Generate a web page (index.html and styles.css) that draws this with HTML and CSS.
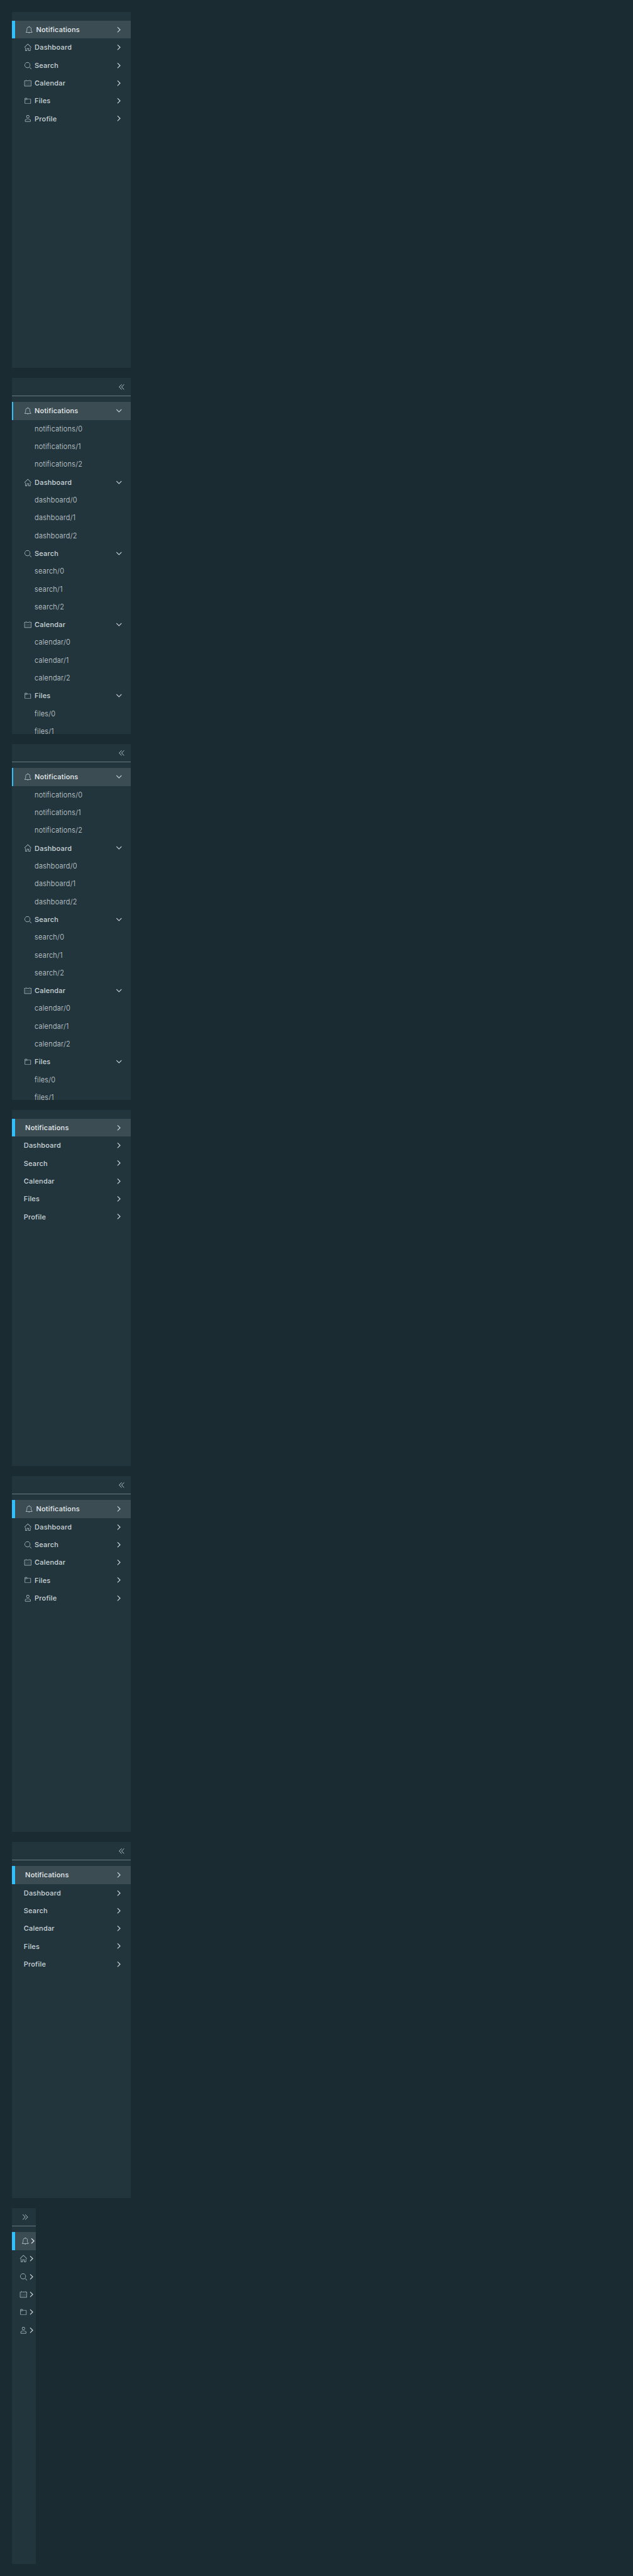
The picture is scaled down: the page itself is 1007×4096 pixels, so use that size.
FILE: index.html
```html
<!DOCTYPE html>
<html lang="en">
<head>
<meta charset="utf-8">
<title>Vertical navigation</title>
<link rel="stylesheet" href="styles.css">
</head>
<body>
<svg class="sprite" aria-hidden="true">
  <symbol id="bell" viewBox="0 0 36 36"><path d="M32.51,27.83A14.4,14.4,0,0,1,30,24.9a12.63,12.63,0,0,1-1.35-4.81V15.15A10.81,10.81,0,0,0,19.21,4.4V3.11a1.33,1.33,0,1,0-2.67,0V4.42a10.81,10.81,0,0,0-9.33,10.73v4.94A12.63,12.63,0,0,1,5.86,24.9a14.4,14.4,0,0,1-2.47,2.93,1,1,0,0,0-.34.75v1.36a1,1,0,0,0,1,1h27.8a1,1,0,0,0,1-1V28.58A1,1,0,0,0,32.51,27.83ZM5.13,28.94a16.17,16.17,0,0,0,2.44-3,14.24,14.24,0,0,0,1.65-5.85V15.15a8.74,8.74,0,1,1,17.47,0v4.94a14.24,14.24,0,0,0,1.65,5.85,16.17,16.17,0,0,0,2.44,3Z"/><path d="M18,34.28A2.67,2.67,0,0,0,20.58,32H15.32A2.67,2.67,0,0,0,18,34.28Z"/></symbol>
  <symbol id="home" viewBox="0 0 36 36"><path d="M33.71,17.29l-15-15a1,1,0,0,0-1.41,0l-15,15a1,1,0,0,0,1.41,1.41L18,4.41,32.29,18.71a1,1,0,0,0,1.41-1.41Z"/><path d="M28,32h-5V22H13V32H8V18L6,20V32a2,2,0,0,0,2,2h7V24h6V34h7a2,2,0,0,0,2-2V19.76l-2-2Z"/></symbol>
  <symbol id="search" viewBox="0 0 36 36"><path d="M16.33,5.05A10.95,10.95,0,1,1,5.39,16,11,11,0,0,1,16.33,5.05m0-2.05a13,13,0,1,0,13,13,13,13,0,0,0-13-13Z"/><path d="M35,33.29l-7.37-7.42-1.42,1.41,7.37,7.42A1,1,0,1,0,35,33.29Z"/></symbol>
  <symbol id="calendar" viewBox="0 0 36 36"><path d="M32.25,6H29V8h3V30H4V8H7V6H3.75A1.78,1.78,0,0,0,2,7.81V30.19A1.78,1.78,0,0,0,3.75,32h28.5A1.78,1.78,0,0,0,34,30.19V7.81A1.78,1.78,0,0,0,32.25,6Z"/><path d="M8,14h2v2H8zM14,14h2v2h-2zM20,14h2v2h-2zM26,14h2v2h-2zM8,19h2v2H8zM14,19h2v2h-2zM20,19h2v2h-2zM26,19h2v2h-2zM8,24h2v2H8zM14,24h2v2h-2zM20,24h2v2h-2zM26,24h2v2h-2zM13,6h10v2H13z"/><path d="M10,10a1,1,0,0,0,1-1V3A1,1,0,0,0,9,3V9A1,1,0,0,0,10,10ZM26,10a1,1,0,0,0,1-1V3a1,1,0,0,0-2,0V9A1,1,0,0,0,26,10Z"/></symbol>
  <symbol id="folder" viewBox="0 0 36 36"><path d="M30,9H16.42L14.11,5.82A2,2,0,0,0,12.49,5H6A2,2,0,0,0,4,7V29a2,2,0,0,0,2,2H30a2,2,0,0,0,2-2V11A2,2,0,0,0,30,9Zm0,20H6V13h7.31a2,2,0,0,0,2-2H6V7h6.49l2.61,3.59a1,1,0,0,0,.81.41H30Z"/></symbol>
  <symbol id="user" viewBox="0 0 36 36"><path d="M18,17a7,7,0,1,0-7-7A7,7,0,0,0,18,17ZM18,5a5,5,0,1,1-5,5A5,5,0,0,1,18,5Z"/><path d="M30.47,24.37a17.16,17.16,0,0,0-24.93,0A2,2,0,0,0,5,25.74V31a2,2,0,0,0,2,2H29a2,2,0,0,0,2-2V25.74A2,2,0,0,0,30.47,24.37ZM29,31H7V25.73a15.17,15.17,0,0,1,22,0h0Z"/></symbol>
  <symbol id="angle" viewBox="0 0 36 36"><path d="M29.52,22.52,18,10.6,6.48,22.52a1.7,1.7,0,0,0,2.45,2.36L18,15.49l9.08,9.39a1.7,1.7,0,0,0,2.45-2.36Z"/></symbol>
  <symbol id="double" viewBox="0 0 36 36"><path d="M29,19.41a1,1,0,0,1-.71-.29L18,8.83,7.71,19.12a1,1,0,0,1-1.41-1.41L18,6,29.71,17.71A1,1,0,0,1,29,19.41Z"/><path d="M29,30.41a1,1,0,0,1-.71-.29L18,19.83,7.71,30.12a1,1,0,0,1-1.41-1.41L18,17,29.71,28.71A1,1,0,0,1,29,30.41Z"/></symbol>
</svg>

<nav class="nav">
  <div class="group active"><svg class="icon"><use href="#bell"/></svg><span class="label">Notifications</span><svg class="caret"><use href="#angle"/></svg></div>
  <div class="group"><svg class="icon"><use href="#home"/></svg><span class="label">Dashboard</span><svg class="caret"><use href="#angle"/></svg></div>
  <div class="group"><svg class="icon"><use href="#search"/></svg><span class="label">Search</span><svg class="caret"><use href="#angle"/></svg></div>
  <div class="group"><svg class="icon"><use href="#calendar"/></svg><span class="label">Calendar</span><svg class="caret"><use href="#angle"/></svg></div>
  <div class="group"><svg class="icon"><use href="#folder"/></svg><span class="label">Files</span><svg class="caret"><use href="#angle"/></svg></div>
  <div class="group"><svg class="icon"><use href="#user"/></svg><span class="label">Profile</span><svg class="caret"><use href="#angle"/></svg></div>
</nav>

<nav class="nav collapsible open">
  <div class="trigger"><svg class="toggle"><use href="#double"/></svg></div>
  <div class="group active"><svg class="icon"><use href="#bell"/></svg><span class="label">Notifications</span><svg class="caret"><use href="#angle"/></svg></div>
  <div class="child">notifications/0</div>
  <div class="child">notifications/1</div>
  <div class="child">notifications/2</div>
  <div class="group"><svg class="icon"><use href="#home"/></svg><span class="label">Dashboard</span><svg class="caret"><use href="#angle"/></svg></div>
  <div class="child">dashboard/0</div>
  <div class="child">dashboard/1</div>
  <div class="child">dashboard/2</div>
  <div class="group"><svg class="icon"><use href="#search"/></svg><span class="label">Search</span><svg class="caret"><use href="#angle"/></svg></div>
  <div class="child">search/0</div>
  <div class="child">search/1</div>
  <div class="child">search/2</div>
  <div class="group"><svg class="icon"><use href="#calendar"/></svg><span class="label">Calendar</span><svg class="caret"><use href="#angle"/></svg></div>
  <div class="child">calendar/0</div>
  <div class="child">calendar/1</div>
  <div class="child">calendar/2</div>
  <div class="group"><svg class="icon"><use href="#folder"/></svg><span class="label">Files</span><svg class="caret"><use href="#angle"/></svg></div>
  <div class="child">files/0</div>
  <div class="child">files/1</div>
</nav>

<nav class="nav collapsible open">
  <div class="trigger"><svg class="toggle"><use href="#double"/></svg></div>
  <div class="group active"><svg class="icon"><use href="#bell"/></svg><span class="label">Notifications</span><svg class="caret"><use href="#angle"/></svg></div>
  <div class="child">notifications/0</div>
  <div class="child">notifications/1</div>
  <div class="child">notifications/2</div>
  <div class="group"><svg class="icon"><use href="#home"/></svg><span class="label">Dashboard</span><svg class="caret"><use href="#angle"/></svg></div>
  <div class="child">dashboard/0</div>
  <div class="child">dashboard/1</div>
  <div class="child">dashboard/2</div>
  <div class="group"><svg class="icon"><use href="#search"/></svg><span class="label">Search</span><svg class="caret"><use href="#angle"/></svg></div>
  <div class="child">search/0</div>
  <div class="child">search/1</div>
  <div class="child">search/2</div>
  <div class="group"><svg class="icon"><use href="#calendar"/></svg><span class="label">Calendar</span><svg class="caret"><use href="#angle"/></svg></div>
  <div class="child">calendar/0</div>
  <div class="child">calendar/1</div>
  <div class="child">calendar/2</div>
  <div class="group"><svg class="icon"><use href="#folder"/></svg><span class="label">Files</span><svg class="caret"><use href="#angle"/></svg></div>
  <div class="child">files/0</div>
  <div class="child">files/1</div>
</nav>

<nav class="nav">
  <div class="group active"><span class="label">Notifications</span><svg class="caret"><use href="#angle"/></svg></div>
  <div class="group"><span class="label">Dashboard</span><svg class="caret"><use href="#angle"/></svg></div>
  <div class="group"><span class="label">Search</span><svg class="caret"><use href="#angle"/></svg></div>
  <div class="group"><span class="label">Calendar</span><svg class="caret"><use href="#angle"/></svg></div>
  <div class="group"><span class="label">Files</span><svg class="caret"><use href="#angle"/></svg></div>
  <div class="group"><span class="label">Profile</span><svg class="caret"><use href="#angle"/></svg></div>
</nav>

<nav class="nav collapsible">
  <div class="trigger"><svg class="toggle"><use href="#double"/></svg></div>
  <div class="group active"><svg class="icon"><use href="#bell"/></svg><span class="label">Notifications</span><svg class="caret"><use href="#angle"/></svg></div>
  <div class="group"><svg class="icon"><use href="#home"/></svg><span class="label">Dashboard</span><svg class="caret"><use href="#angle"/></svg></div>
  <div class="group"><svg class="icon"><use href="#search"/></svg><span class="label">Search</span><svg class="caret"><use href="#angle"/></svg></div>
  <div class="group"><svg class="icon"><use href="#calendar"/></svg><span class="label">Calendar</span><svg class="caret"><use href="#angle"/></svg></div>
  <div class="group"><svg class="icon"><use href="#folder"/></svg><span class="label">Files</span><svg class="caret"><use href="#angle"/></svg></div>
  <div class="group"><svg class="icon"><use href="#user"/></svg><span class="label">Profile</span><svg class="caret"><use href="#angle"/></svg></div>
</nav>

<nav class="nav collapsible">
  <div class="trigger"><svg class="toggle"><use href="#double"/></svg></div>
  <div class="group active"><span class="label">Notifications</span><svg class="caret"><use href="#angle"/></svg></div>
  <div class="group"><span class="label">Dashboard</span><svg class="caret"><use href="#angle"/></svg></div>
  <div class="group"><span class="label">Search</span><svg class="caret"><use href="#angle"/></svg></div>
  <div class="group"><span class="label">Calendar</span><svg class="caret"><use href="#angle"/></svg></div>
  <div class="group"><span class="label">Files</span><svg class="caret"><use href="#angle"/></svg></div>
  <div class="group"><span class="label">Profile</span><svg class="caret"><use href="#angle"/></svg></div>
</nav>

<nav class="nav collapsible collapsed">
  <div class="trigger"><svg class="toggle"><use href="#double"/></svg></div>
  <div class="group active"><svg class="icon"><use href="#bell"/></svg><svg class="caret"><use href="#angle"/></svg></div>
  <div class="group"><svg class="icon"><use href="#home"/></svg><svg class="caret"><use href="#angle"/></svg></div>
  <div class="group"><svg class="icon"><use href="#search"/></svg><svg class="caret"><use href="#angle"/></svg></div>
  <div class="group"><svg class="icon"><use href="#calendar"/></svg><svg class="caret"><use href="#angle"/></svg></div>
  <div class="group"><svg class="icon"><use href="#folder"/></svg><svg class="caret"><use href="#angle"/></svg></div>
  <div class="group"><svg class="icon"><use href="#user"/></svg><svg class="caret"><use href="#angle"/></svg></div>
</nav>
</body>
</html>
```
FILE: styles.css
```css
* { box-sizing: border-box; }

/* 1rem is ten design units. */
html {
  font-size: 7.8648px;
  background: #1b2b32;
}

body {
  margin: 0;
  padding: 2.4rem 2.4rem 2.3rem;
  display: flex;
  flex-direction: column;
  gap: 2rem;
  font-family: "Metropolis", "Inter", sans-serif;
  font-size: 1.4rem;
  line-height: 3.6rem;
  color: #ccd6da;
}

.sprite { display: none; }

svg {
  display: block;
  flex: none;
  width: 1.6rem;
  height: 1.6rem;
  fill: currentColor;
}

.nav {
  width: 24rem;
  height: 72rem;
  flex: none;
  padding-top: 1.8rem;
  background: #22343c;
  overflow: hidden;
}

.collapsible { padding-top: 0; }

.trigger {
  height: 3.7rem;
  margin-bottom: 1.2rem;
  padding-right: 1rem;
  display: flex;
  align-items: center;
  justify-content: flex-end;
  border-bottom: 1px solid #6b7a80;
  color: #c0cbd1;
}

.toggle { transform: rotate(-90deg); }

.group {
  height: 3.6rem;
  padding: 0 1.5rem 0 2.4rem;
  display: flex;
  align-items: center;
  font-weight: 500;
  letter-spacing: 0.025rem;
}

.icon {
  margin-right: 0.6rem;
  color: #c3ced3;
}

.label { flex: 1; }

.caret { transform: rotate(90deg); }

.open .caret { transform: rotate(180deg); }

.active {
  padding-left: calc(2.7rem - 5px);
  border-left: 5px solid #2ec0ff;
  background: #3b4c53;
  color: #e9ecef;
}

.active .caret { color: #ccd6da; }

.open .active {
  padding-left: calc(2.4rem - 2px);
  border-left-width: 2px;
}

.child {
  height: 3.6rem;
  padding-left: 4.6rem;
  font-weight: 300;
  letter-spacing: 0.03rem;
  color: #ccd6da;
}

.collapsed { width: 4.8rem; }

.collapsed .toggle { transform: rotate(90deg); }

.collapsed .trigger { padding-right: 1.3rem; }

.collapsed .group { padding: 0 0 0 1.6rem; }

.collapsed .active { padding-left: calc(1.9rem - 5px); }

.collapsed .icon { margin-right: 0; }

.collapsed .active .caret { color: #e9ecef; }
```
